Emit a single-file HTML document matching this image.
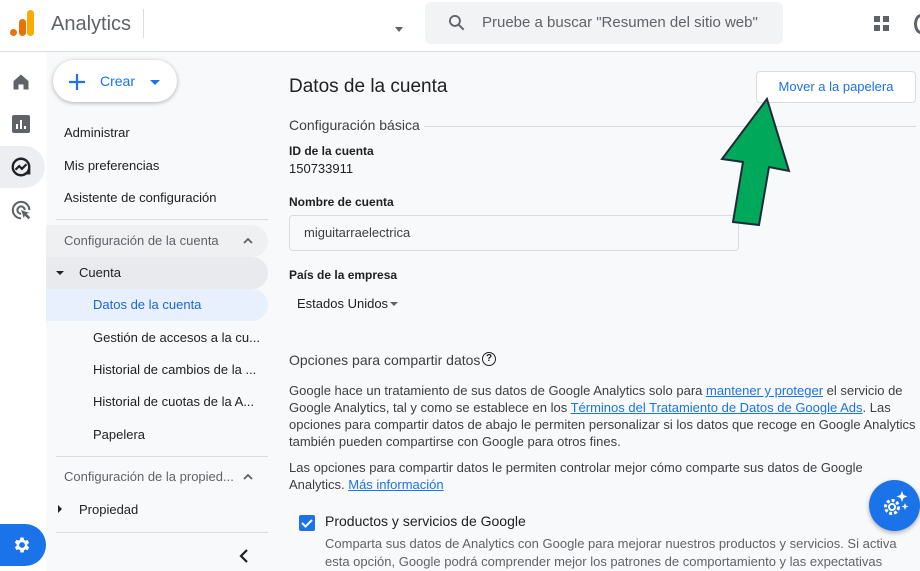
<!DOCTYPE html>
<html><head><meta charset="utf-8"><style>
*{box-sizing:border-box;margin:0;padding:0}
body{width:920px;height:571px;overflow:hidden;font-family:"Liberation Sans",Arial,sans-serif;background:#f8f9fb;color:#202124;position:relative}
.abs{position:absolute}
.hdr{left:0;top:0;width:920px;height:52px;background:#fff;border-bottom:1px solid #dadce0}
.rail{left:0;top:52px;width:46px;height:519px;background:#fff}
.nav{left:46px;top:52px;width:234px;height:519px;background:#f8f9fa}
.ni{position:absolute;left:0;width:222px;height:32px;line-height:32px;font-size:13px;color:#202124;border-radius:0 16px 16px 0}
.t13{font-size:13px;line-height:17px;color:#3c4043}
a{color:#1a73e8;text-decoration:underline}
</style></head><body>
<div class="abs hdr"></div>
<div class="abs" style="left:10px;top:29px;width:7px;height:7px;border-radius:50%;background:#e8710a"></div>
<div class="abs" style="left:19px;top:19px;width:7px;height:17px;border-radius:4px;background:#e8710a"></div>
<div class="abs" style="left:27px;top:10px;width:7px;height:26px;border-radius:4px;background:#f9ab00"></div>
<div class="abs" style="left:51px;top:13px;font-size:20px;color:#5f6368">Analytics</div>
<div class="abs" style="left:143px;top:9px;width:1px;height:29px;background:#dadce0"></div>
<div class="abs" style="left:395px;top:27px;border:4px solid transparent;border-top:5px solid #5f6368"></div>
<div class="abs" style="left:425px;top:2px;width:358px;height:42px;background:#f1f3f4;border-radius:6px"></div>
<svg class="abs" style="left:447px;top:13px" width="20" height="20" viewBox="0 0 24 24"><circle cx="9.5" cy="9.5" r="6" fill="none" stroke="#5f6368" stroke-width="2.2"/><path d="M14 14l6 6" stroke="#5f6368" stroke-width="2.4"/></svg>
<div class="abs" style="left:482px;top:14px;font-size:15px;color:#5f6368">Pruebe a buscar "Resumen del sitio web"</div>
<svg class="abs" style="left:873px;top:15px" width="18" height="18" viewBox="0 0 18 18" fill="#5f6368"><rect x="1" y="1" width="6" height="6"/><rect x="10" y="1" width="6" height="6"/><rect x="1" y="10" width="6" height="6"/><rect x="10" y="10" width="6" height="6"/></svg>
<div class="abs" style="left:914px;top:14px;width:14px;height:20px;border-radius:50%;border:3px solid #5f6368"></div>

<div class="abs rail"></div>
<svg class="abs" style="left:11px;top:72px" width="20" height="20" viewBox="0 0 24 24"><path d="M3 11L12 3l9 8v10h-6v-6H9v6H3z" fill="#5f6368"/></svg>
<svg class="abs" style="left:12px;top:115px" width="18" height="18" viewBox="0 0 18 18"><rect width="18" height="18" rx="2" fill="#5f6368"/><path d="M5 9v5M9 5v9M13 11v3" stroke="#fff" stroke-width="2"/></svg>
<div class="abs" style="left:0;top:146px;width:45px;height:42px;background:#eceef1;border-radius:0 21px 21px 0"></div>
<svg class="abs" style="left:10px;top:156px" width="22" height="22" viewBox="0 0 24 24"><circle cx="12" cy="12" r="9" fill="none" stroke="#202124" stroke-width="2.6"/><path d="M6 15l4-4 3 3 5-5" fill="none" stroke="#202124" stroke-width="2.4"/><path d="M16 19h5v-5" stroke="#202124" stroke-width="2.4" fill="none"/></svg>
<svg class="abs" style="left:11px;top:200px" width="22" height="22" viewBox="0 0 24 24"><path d="M11 20a9 9 0 1 1 9-9" fill="none" stroke="#5f6368" stroke-width="2.2"/><path d="M11 15a4 4 0 1 1 4-4" fill="none" stroke="#5f6368" stroke-width="2.2"/><path d="M11 11l9 3-3 1 4 4-2 2-4-4-1 3z" fill="#5f6368"/></svg>
<div class="abs" style="left:0;top:524px;width:46px;height:42px;background:#1a73e8;border-radius:0 21px 21px 0"></div>
<svg class="abs" style="left:12px;top:535px" width="20" height="20" viewBox="0 0 24 24"><path fill="#fff" d="M19.4 13a7.5 7.5 0 0 0 0-2l2.1-1.6-2-3.5-2.5 1a7 7 0 0 0-1.700-1L15 3h-4l-.4 2.7a7 7 0 0 0-1.7 1l-2.5-1-2 3.5L6.6 11a7.5 7.5 0 0 0 0 2l-2.1 1.6 2 3.5 2.5-1a7 7 0 0 0 1.7 1L11 21h4l.4-2.7a7 7 0 0 0 1.7-1l2.5 1 2-3.5zM13 15.5a3.5 3.5 0 1 1 0-7 3.5 3.5 0 0 1 0 7z" transform="translate(-1 0)"/></svg>

<div class="abs nav">
 <div class="abs" style="left:7px;top:8px;width:124px;height:42px;background:#fff;border-radius:21px;box-shadow:0 1px 4px rgba(0,0,0,.3)"></div>
 <svg class="abs" style="left:22px;top:21px" width="18" height="18" viewBox="0 0 18 18"><path d="M9 1v16M1 9h16" stroke="#1a73e8" stroke-width="2.2"/></svg>
 <div class="abs" style="left:54px;top:21px;font-size:14px;color:#1a73e8">Crear</div>
 <div class="abs" style="left:104px;top:28px;border:5px solid transparent;border-top:5px solid #1a73e8"></div>
 <div class="ni" style="top:65px;left:18px">Administrar</div>
 <div class="ni" style="top:98px;left:18px">Mis preferencias</div>
 <div class="ni" style="top:130px;left:18px">Asistente de configuración</div>
 <div class="abs" style="left:10px;top:167px;width:212px;height:1px;background:#dadce0"></div>
 <div class="ni" style="top:173px;background:#eef0f2;color:#5f6368;padding-left:18px">Configuración de la cuenta<svg style="position:absolute;left:197px;top:12px" width="10" height="7" viewBox="0 0 10 7"><path d="M1 6l4-4 4 4" stroke="#5f6368" stroke-width="1.8" fill="none"/></svg></div>
 <div class="ni" style="top:205px;background:#e8eaed;padding-left:33px">Cuenta</div>
 <div class="abs" style="left:10px;top:219px;border:4px solid transparent;border-top:4px solid #202124"></div>
 <div class="ni" style="top:237px;background:#e8f0fe;color:#1967d2;padding-left:47px">Datos de la cuenta</div>
 <div class="ni" style="top:270px;padding-left:47px">Gestión de accesos a la cu...</div>
 <div class="ni" style="top:302px;padding-left:47px">Historial de cambios de la ...</div>
 <div class="ni" style="top:334px;padding-left:47px">Historial de cuotas de la A...</div>
 <div class="ni" style="top:367px;padding-left:47px">Papelera</div>
 <div class="abs" style="left:10px;top:404px;width:212px;height:1px;background:#dadce0"></div>
 <div class="ni" style="top:409px;color:#5f6368;padding-left:18px">Configuración de la propied...<svg style="position:absolute;left:197px;top:12px" width="10" height="7" viewBox="0 0 10 7"><path d="M1 6l4-4 4 4" stroke="#5f6368" stroke-width="1.8" fill="none"/></svg></div>
 <div class="abs" style="left:12px;top:453px;border:4px solid transparent;border-left:4px solid #202124"></div>
 <div class="ni" style="top:442px;padding-left:33px">Propiedad</div>
 <div class="abs" style="left:10px;top:480px;width:212px;height:1px;background:#dadce0"></div>
 <svg class="abs" style="left:192px;top:497px" width="12" height="14" viewBox="0 0 12 14"><path d="M9 1L3 7l6 6" stroke="#202124" stroke-width="2.2" fill="none"/></svg>
</div>

<div class="abs" style="left:289px;top:76px;font-size:19px;color:#202124">Datos de la cuenta</div>
<div class="abs" style="left:756px;top:71px;width:160px;height:32px;background:#fff;border:1px solid #dadce0;border-radius:4px;font-size:13px;color:#1a73e8;text-align:center;line-height:30px">Mover a la papelera</div>
<div class="abs" style="left:289px;top:117px;font-size:14px;color:#3c4043">Configuración básica</div>
<div class="abs" style="left:424px;top:126px;width:492px;height:1px;background:#dadce0"></div>
<div class="abs" style="left:289px;top:144px;font-size:12px;font-weight:bold">ID de la cuenta</div>
<div class="abs" style="left:289px;top:161px;font-size:13px">150733911</div>
<div class="abs" style="left:289px;top:195px;font-size:12px;font-weight:bold">Nombre de cuenta</div>
<div class="abs" style="left:289px;top:215px;width:450px;height:36px;border:1px solid #dadce0;border-radius:4px;background:#f8f9fb;font-size:13px;color:#3c4043;padding:9px 0 0 14px">miguitarraelectrica</div>
<div class="abs" style="left:289px;top:268px;font-size:12px;font-weight:bold">País de la empresa</div>
<div class="abs" style="left:297px;top:296px;font-size:13px">Estados Unidos</div>
<div class="abs" style="left:390px;top:302px;border:4px solid transparent;border-top:4px solid #5f6368"></div>
<div class="abs" style="left:289px;top:352px;font-size:14px;color:#3c4043">Opciones para compartir datos</div>
<div class="abs" style="left:482px;top:352px;width:14px;height:14px;border:1.6px solid #202124;border-radius:50%;font-size:10px;font-weight:bold;text-align:center;line-height:11px">?</div>
<div class="abs t13" style="left:289px;top:382px;width:630px">Google hace un tratamiento de sus datos de Google Analytics solo para <a>mantener y proteger</a> el servicio de Google Analytics, tal y como se establece en los <a>Términos del Tratamiento de Datos de Google Ads</a>. Las opciones para compartir datos de abajo le permiten personalizar si los datos que recoge en Google Analytics también pueden compartirse con Google para otros fines.</div>
<div class="abs t13" style="left:289px;top:459px;width:590px">Las opciones para compartir datos le permiten controlar mejor cómo comparte sus datos de Google Analytics. <a>Más información</a></div>
<div class="abs" style="left:299px;top:515px;width:16px;height:16px;background:#1a73e8;border-radius:2px"></div>
<svg class="abs" style="left:299px;top:515px" width="16" height="16" viewBox="0 0 16 16"><path d="M3 8l3.5 3.5L13 5" stroke="#fff" stroke-width="2" fill="none"/></svg>
<div class="abs" style="left:325px;top:513px;font-size:14px">Productos y servicios de Google</div>
<div class="abs t13" style="left:325px;top:535px;width:580px;color:#5f6368;line-height:18px">Comparta sus datos de Analytics con Google para mejorar nuestros productos y servicios. Si activa esta opción, Google podrá comprender mejor los patrones de comportamiento y las expectativas</div>

<svg class="abs" style="left:718px;top:95px" width="80" height="135" viewBox="0 0 80 135"><path d="M49 4L4 64 25 67 15 127 41 130 51 72 71 76z" fill="#00a85a" stroke="#1f2a3a" stroke-width="2"/></svg>

<div class="abs" style="left:869px;top:480px;width:51px;height:51px;border-radius:50%;background:#1a73e8;box-shadow:0 2px 5px rgba(0,0,0,.3)"></div>
<svg class="abs" style="left:878px;top:489px" width="32" height="32" viewBox="0 0 32 32"><circle cx="14" cy="18" r="6.5" fill="none" stroke="#fff" stroke-width="3" stroke-dasharray="3 2"/><circle cx="14" cy="18" r="3" fill="none" stroke="#fff" stroke-width="2"/><path d="M24 2l1.5 4 4 1.5-4 1.5L24 13l-1.5-4-4-1.5 4-1.5zM27 14l1 2.5 2.5 1-2.5 1L27 21l-1-2.5-2.5-1 2.5-1z" fill="#fff"/></svg>
</body></html>
